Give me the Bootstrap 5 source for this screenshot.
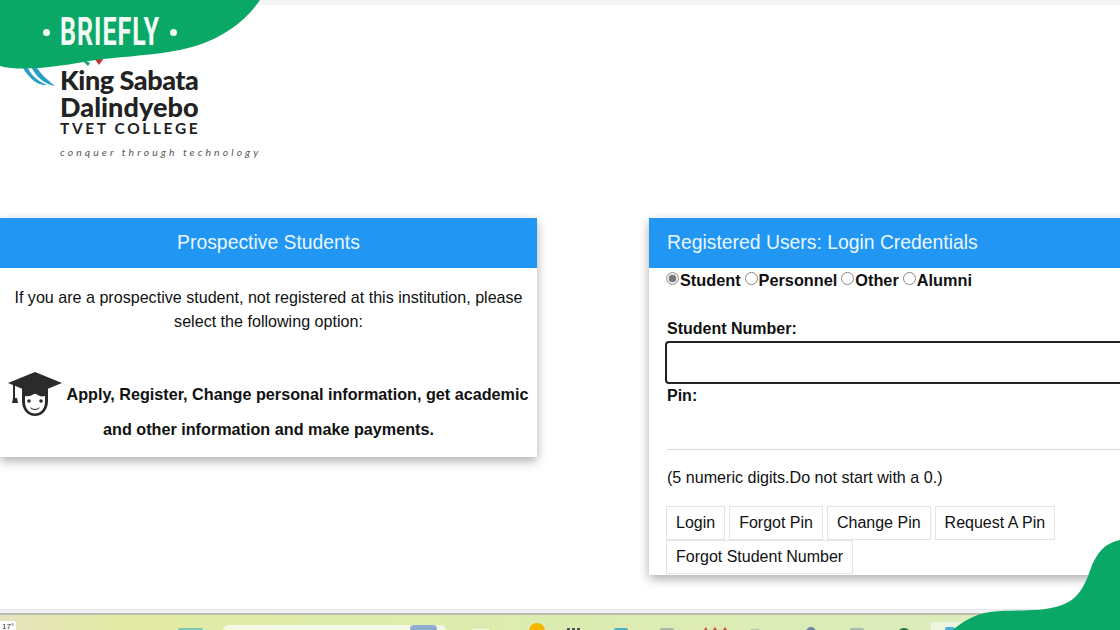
<!DOCTYPE html>
<html lang="en">
<head>
<meta charset="utf-8">
<title>King Sabata Dalindyebo TVET College</title>
<link rel="stylesheet" href="https://cdn.jsdelivr.net/npm/bootstrap@5.3.0/dist/css/bootstrap.min.css">
<style>
html,body{height:630px;overflow:hidden;background:#fff}
body{font-family:"Liberation Sans",Arial,sans-serif;font-size:16px;color:#111;position:relative;width:1120px}
.top-strip{height:5px;background:#f3f3f3;flex:none}
.logo-area{height:213px;flex:none;padding:61px 0 0 60px;font-family:Lato,sans-serif;color:#222}
.logo-name{font-weight:900;font-size:27px;line-height:27px;letter-spacing:-.45px}
.logo-name-wide{letter-spacing:.05px}
.logo-sub{font-size:15.5px;line-height:17px;letter-spacing:2.6px;font-weight:700;margin-top:0}
.logo-tag{font-size:10.4px;line-height:12px;font-style:italic;letter-spacing:3.1px;color:#555;margin-top:9px;white-space:nowrap}
.panels{height:391px;flex:none}
.panel{background:#fff;box-shadow:0 4px 10px rgba(0,0,0,.32);flex:none}
.panel-left{width:537px;height:239px}
.panel-right{width:520px;height:357px;margin-left:112px}
.panel-head{background:#2196f3;color:#eaf6ff;height:50px;font-size:19.35px;line-height:49px}
.panel-left .panel-head{text-align:center}
.panel-right .panel-head{padding-left:18px}
.intro{padding:18px 10px 0;text-align:center;line-height:23.5px;height:109px;font-size:16.1px}
.apply{font-weight:700;text-align:center;line-height:35px;font-size:16.2px}
.cap{width:54px;height:45px;vertical-align:-11px;margin:-5px 4px -6px 0}
.login-body{padding:0 0 0 18px;position:relative}
.roles{height:24px;font-weight:700;line-height:24px;display:flex;align-items:center;font-size:16.3px;margin-left:-1px}
.roles label{display:flex;align-items:center;margin-right:4px}
.roles input{appearance:none;width:13px;height:13px;border:1px solid #888;border-radius:50%;margin:0 1px 3px 0;background:#fff}
.roles input:checked{border-color:#999;background:radial-gradient(circle,#777 0 3.5px,#e6e6e6 4px)}
.field-label{font-weight:700;line-height:18px;display:block;margin:0}
.sn-label{margin-top:28px}
.sn-input{display:block;width:510px;height:43px;border:2px solid #222;border-radius:4px;margin:3px 0 3px -2px;background:#fff}
.rule{border:0;border-top:1px solid #d9d9d9;margin:44px 0 0 0;opacity:1}
.hint{margin:16px 0 0;line-height:22px;font-size:16.1px}
.acts{margin:18px 0 0 -1px;width:440px;column-gap:4px}
.act-btn{border:1px solid #e4e4e4;background:#fff;color:#111;font-size:16px;height:34px;line-height:32px;padding:0 9px;border-radius:0;white-space:nowrap}
.rule-bottom{height:6px;flex:none;border-top:1px solid #e4e4e8;border-bottom:2px solid #b9bcae;background:#f2f2f6}
.taskbar{height:15px;flex:none;display:block}
.chip-text{font-family:"Liberation Sans",sans-serif;font-size:8px;fill:#333}
.overlay{position:absolute;pointer-events:none}
.blob-top{left:0;top:0;width:270px;height:100px}
.blob-bottom{left:940px;top:530px;width:180px;height:100px}
.brand{position:absolute;left:43px;top:14px;display:flex;align-items:center;color:#f2fbf6}
.brand-name{font-family:Roboto,sans-serif;font-weight:700;font-size:38px;line-height:36px;letter-spacing:1.5px;width:101px;margin:0 9px 0 10px;transform:scaleX(.66);transform-origin:left center;white-space:nowrap}
.brand-dot{width:7px;height:7px;border-radius:50%;background:#f2fbf6}
</style>
</head>
<body class="d-flex flex-column">
<div class="top-strip"></div>
<header class="logo-area">
  <div class="logo-name">King Sabata<br><span class="logo-name-wide">Dalindyebo</span></div>
  <div class="logo-sub">TVET COLLEGE</div>
  <div class="logo-tag">conquer through technology</div>
</header>
<main class="panels d-flex align-items-start">
  <section class="panel panel-left">
    <div class="panel-head">Prospective Students</div>
    <p class="intro m-0">If you are a prospective student, not registered at this institution, please select the following option:</p>
    <div class="apply">
      <svg class="cap" viewBox="0 0 54 45" aria-hidden="true">
        <path d="M14 15v14c0 9 6 15 13 15s13-6 13-15V15z" fill="#2b2b2b"/>
        <path d="M17 24c4 1 8-1 10-3 3 3 7 4 10 3v6c0 7-5 11.500-10 11.500S17 37 17 30z" fill="#fff"/>
        <path d="M27 0 54 11 27 22 0 11z" fill="#2b2b2b"/>
        <path d="M5 12h2v14h2l1 5H4l1-5h0z" fill="#2b2b2b"/>
        <circle cx="21" cy="29" r="1.800" fill="#2b2b2b"/><circle cx="33" cy="29" r="1.800" fill="#2b2b2b"/>
        <path d="M22 35c3 2.500 7 2.500 10 0-1 4-9 4-10 0z" fill="#2b2b2b"/>
      </svg>Apply, Register, Change personal information, get academic and other information and make payments.
    </div>
  </section>
  <section class="panel panel-right">
    <div class="panel-head">Registered Users: Login Credentials</div>
    <form class="login-body">
      <div class="roles">
        <label><input type="radio" name="role" checked>Student</label>
        <label><input type="radio" name="role">Personnel</label>
        <label><input type="radio" name="role">Other</label>
        <label><input type="radio" name="role">Alumni</label>
      </div>
      <label class="field-label sn-label" for="sn">Student Number:</label>
      <input class="sn-input" id="sn" type="text">
      <label class="field-label">Pin:</label>
      <hr class="rule">
      <p class="hint">(5 numeric digits.Do not start with a 0.)</p>
      <div class="acts d-flex flex-wrap">
        <button type="button" class="act-btn">Login</button>
        <button type="button" class="act-btn">Forgot Pin</button>
        <button type="button" class="act-btn">Change Pin</button>
        <button type="button" class="act-btn">Request A Pin</button>
        <button type="button" class="act-btn">Forgot Student Number</button>
      </div>
    </form>
  </section>
</main>
<div class="rule-bottom"></div>
<svg class="taskbar" width="1120" height="15" viewBox="0 0 1120 15" aria-hidden="true">
  <defs><linearGradient id="tb" x1="0" x2="1" y1="0" y2="0">
    <stop offset="0" stop-color="#e6e2c0"/><stop offset=".1" stop-color="#e2eba4"/><stop offset=".5" stop-color="#dcecb0"/><stop offset="1" stop-color="#dcecc0"/>
  </linearGradient></defs>
  <rect width="1120" height="15" fill="url(#tb)"/>
  <rect x="-4" y="6" width="20" height="10" rx="3" fill="#fff"/>
  <text class="chip-text" x="2" y="13.500">17°</text>
  <rect x="178" y="13" width="25" height="4" rx="2" fill="#7cc4b4"/>
  <rect x="223" y="10" width="223" height="12" rx="6" fill="#f3f8e6"/>
  <rect x="410" y="10" width="27" height="8" rx="4" fill="#8eaed0"/>
  <rect x="471" y="14" width="19" height="4" rx="2" fill="#f3f8e6"/>
  <circle cx="537" cy="16" r="8" fill="#f5b400"/>
  <rect x="567" y="13" width="3" height="4" fill="#4a5560"/><rect x="572" y="13" width="3" height="4" fill="#4a5560"/><rect x="577" y="13" width="3" height="4" fill="#4a5560"/>
  <rect x="614" y="13" width="14" height="5" rx="2" fill="#4ab0c8"/>
  <rect x="660" y="13" width="14" height="5" rx="2" fill="#a9b8a8"/>
  <path d="M703 16l3-4 2 4zM712 16l3-4 3 4zM722 16l3-4 3 4z" fill="#c9574a"/>
  <rect x="750" y="14" width="10" height="4" rx="2" fill="#b7c0a8"/>
  <circle cx="811" cy="17" r="5" fill="#6c87a8"/>
  <rect x="850" y="13" width="14" height="5" rx="2" fill="#a6bcb0"/>
  <circle cx="904" cy="20.500" r="7.500" fill="#27703f"/>
  <rect x="931" y="7" width="40" height="10" rx="2" fill="#eef4df"/>
  <rect x="945" y="12" width="10" height="5" rx="2" fill="#4ab0d8"/>
</svg>

<div class="overlay blob-top">
  <svg width="270" height="100" viewBox="0 0 270 100" aria-hidden="true">
    <path d="M27 66c3 8 10 15 20 19-8 1-17-5-24-17z M36 66c3 6 9 12 19 20-11-2-20-10-24-20z" fill="#2a9fc4"/>
    <path d="M94 58h10l-5 7z" fill="#d2302c"/>
    <path d="M80 58l10 5-2 3z" fill="#1aa15e"/>
    <path d="M0 0H260C244 24 216 43 180 50 150 56 110 57 84 62 60 66 22 72 0 66z" fill="#0aa866"/>
  </svg>
  <div class="brand">
    <span class="brand-dot"></span>
    <span class="brand-name">BRIEFLY</span>
    <span class="brand-dot"></span>
  </div>
</div>
<div class="overlay blob-bottom">
  <svg width="180" height="100" viewBox="0 0 180 100" aria-hidden="true">
    <path d="M180 10C164 13 157 24 152 35 146 52 141 68 122 75 100 83 75 79 50 82 35 84 22 92 13 100H180z" fill="#0aa866"/>
  </svg>
</div>
<script src="https://cdn.jsdelivr.net/npm/bootstrap@5.3.0/dist/js/bootstrap.bundle.min.js"></script>
</body>
</html>
